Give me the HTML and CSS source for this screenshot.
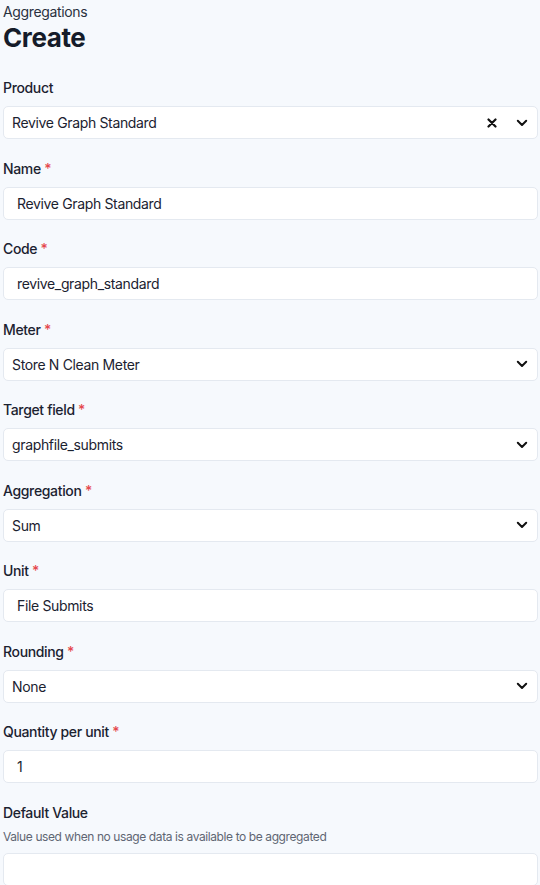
FILE: index.html
```html
<!DOCTYPE html>
<html>
<head>
<meta charset="utf-8">
<link rel="stylesheet" href="styles.css">
</head>
<body>
<div class="page">
  <div class="crumb">Aggregations</div>
  <h1 class="title">Create</h1>
  <form class="form">
    <div class="field">
      <div class="label">Product</div>
      <div class="control select">
        <span class="value">Revive Graph Standard</span>
        <span class="icons">
          <svg class="clear" width="10" height="10" viewBox="0 0 10 10"><path d="M1.5 1.5L8.5 8.5M8.5 1.5L1.5 8.5" stroke="#111" stroke-width="2.2" stroke-linecap="round"/></svg>
          <svg class="chev" width="12" height="8" viewBox="0 0 12 8"><path d="M1.8 1.8L6 6L10.2 1.8" fill="none" stroke="#111" stroke-width="2" stroke-linecap="round" stroke-linejoin="round"/></svg>
        </span>
      </div>
    </div>
    <div class="field">
      <div class="label">Name <span class="req">*</span></div>
      <div class="control input"><span class="value">Revive Graph Standard</span></div>
    </div>
    <div class="field">
      <div class="label">Code <span class="req">*</span></div>
      <div class="control input"><span class="value">revive_graph_standard</span></div>
    </div>
    <div class="field">
      <div class="label">Meter <span class="req">*</span></div>
      <div class="control select">
        <span class="value">Store N Clean Meter</span>
        <span class="icons"><svg class="chev" width="12" height="8" viewBox="0 0 12 8"><path d="M1.8 1.8L6 6L10.2 1.8" fill="none" stroke="#111" stroke-width="2" stroke-linecap="round" stroke-linejoin="round"/></svg></span>
      </div>
    </div>
    <div class="field">
      <div class="label">Target field <span class="req">*</span></div>
      <div class="control select">
        <span class="value">graphfile_submits</span>
        <span class="icons"><svg class="chev" width="12" height="8" viewBox="0 0 12 8"><path d="M1.8 1.8L6 6L10.2 1.8" fill="none" stroke="#111" stroke-width="2" stroke-linecap="round" stroke-linejoin="round"/></svg></span>
      </div>
    </div>
    <div class="field">
      <div class="label">Aggregation <span class="req">*</span></div>
      <div class="control select">
        <span class="value">Sum</span>
        <span class="icons"><svg class="chev" width="12" height="8" viewBox="0 0 12 8"><path d="M1.8 1.8L6 6L10.2 1.8" fill="none" stroke="#111" stroke-width="2" stroke-linecap="round" stroke-linejoin="round"/></svg></span>
      </div>
    </div>
    <div class="field">
      <div class="label">Unit <span class="req">*</span></div>
      <div class="control input"><span class="value">File Submits</span></div>
    </div>
    <div class="field">
      <div class="label">Rounding <span class="req">*</span></div>
      <div class="control select">
        <span class="value">None</span>
        <span class="icons"><svg class="chev" width="12" height="8" viewBox="0 0 12 8"><path d="M1.8 1.8L6 6L10.2 1.8" fill="none" stroke="#111" stroke-width="2" stroke-linecap="round" stroke-linejoin="round"/></svg></span>
      </div>
    </div>
    <div class="field">
      <div class="label">Quantity per unit <span class="req">*</span></div>
      <div class="control input"><span class="value">1</span></div>
    </div>
    <div class="field">
      <div class="label">Default Value</div>
      <div class="hint">Value used when no usage data is available to be aggregated</div>
      <div class="control input"><span class="value"></span></div>
    </div>
  </form>
</div>
</body>
</html>
```

FILE: styles.css
```css
html, body {
  margin: 0;
  padding: 0;
  background: #f6f9fd;
}
body {
  font-family: "Inter", "Noto Sans", sans-serif;
  color: #1b2230;
  letter-spacing: -0.35px;
}
.page {
  padding: 2px 2px 0 3px;
  display: flex;
  flex-direction: column;
}
.crumb {
  font-size: 14px;
  line-height: 20px;
  color: #2a3140;
}
.title {
  margin: 0;
  font-size: 26px;
  line-height: 32px;
  font-weight: 700;
  color: #151c2a;
  letter-spacing: -0.4px;
}
.form {
  margin-top: 24px;
  display: flex;
  flex-direction: column;
  gap: 19.5px;
}
.field {
  display: flex;
  flex-direction: column;
}
.label {
  font-size: 14px;
  line-height: 20px;
  font-weight: 500;
  color: #1b2230;
  margin-bottom: 8px;
}
.req {
  color: #e5484d;
  font-weight: 500;
}
.hint {
  font-size: 12px;
  line-height: 16px;
  color: #5f6673;
  letter-spacing: -0.4px;
  margin-top: -2px;
  margin-bottom: 8px;
}
.control {
  height: 33px;
  box-sizing: border-box;
  background: #ffffff;
  border: 1px solid #e4e9f0;
  border-radius: 5px;
  display: flex;
  align-items: center;
  font-size: 14px;
  color: #1b2230;
}
.input {
  padding: 0 13px 0 13px;
}
.select {
  padding: 0 9px 0 8px;
  justify-content: space-between;
}
.value {
  white-space: nowrap;
}
.icons {
  display: flex;
  align-items: center;
  gap: 19px;
}
.chev {
  display: block;
}
.clear {
  display: block;
}
```
